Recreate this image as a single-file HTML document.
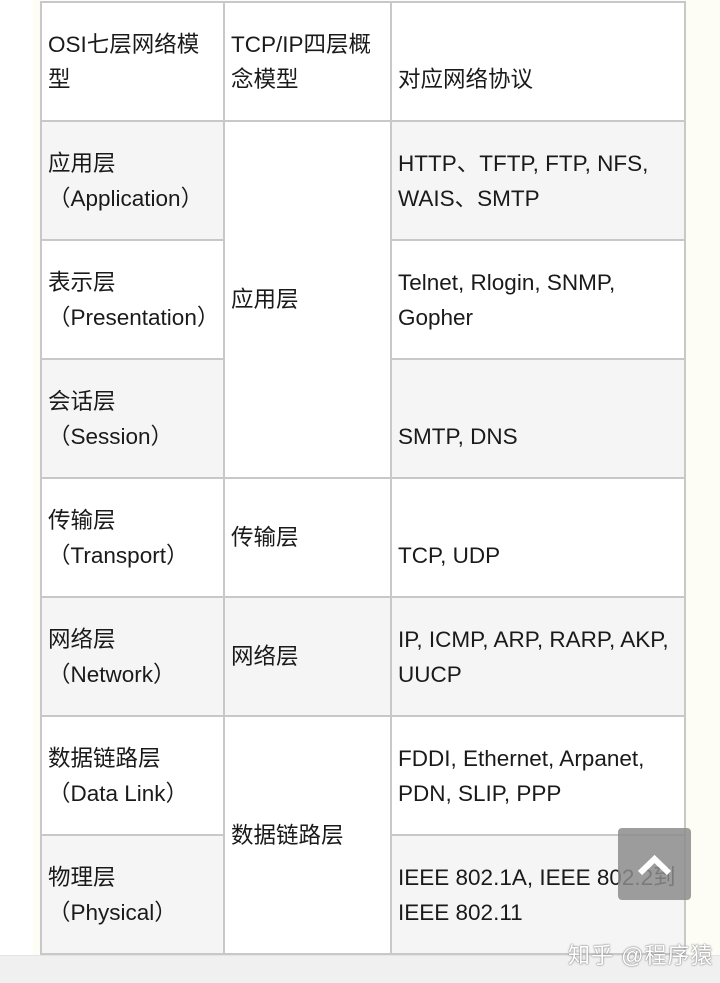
<!DOCTYPE html>
<html><head><meta charset="utf-8"><style>
*{margin:0;padding:0;box-sizing:border-box}
body{width:720px;height:983px;overflow:hidden;background:#fdfdf6;position:relative;font-family:"Liberation Sans","Noto Sans CJK SC",sans-serif;font-size:22.5px;color:#1a1a1a}
.lft{position:absolute;left:0;top:0;width:33px;height:955px;background:#fff}
table{position:absolute;left:40px;top:1px;border-collapse:collapse;table-layout:fixed;width:644px}
td{border:2px solid #c8c8c8;vertical-align:middle;padding:0 0 0 6px;line-height:35px;height:119px;overflow:hidden;white-space:nowrap}
.g{background:#f5f5f5}.w{background:#fff}
.bar{position:absolute;left:0;top:955px;width:720px;height:28px;background:#f0f0f0;border-top:1px solid #e4e4e4}
.wm{position:absolute;left:568px;top:938px;font-size:22px;color:#fff;text-shadow:0 0 2px #888,0 0 1px #666;letter-spacing:1px}
.btn{position:absolute;left:618px;top:828px;width:73px;height:72px;background:rgba(140,140,140,.85);border-radius:4px}
</style></head><body>
<div class="lft"></div>
<table>
<colgroup><col style="width:183px"><col style="width:167px"><col style="width:294px"></colgroup>
<tr class="w"><td>OSI七层网络模<br>型</td><td>TCP/IP四层概<br>念模型</td><td><br>对应网络协议</td></tr>
<tr><td class="g">应用层<br>（Application）</td><td class="w" rowspan="3">应用层</td><td class="g">HTTP、TFTP, FTP, NFS,<br>WAIS、SMTP</td></tr>
<tr><td class="w">表示层<br>（Presentation）</td><td class="w">Telnet, Rlogin, SNMP,<br>Gopher</td></tr>
<tr><td class="g">会话层<br>（Session）</td><td class="g"><br>SMTP, DNS</td></tr>
<tr><td class="w">传输层<br>（Transport）</td><td class="w">传输层</td><td class="w"><br>TCP, UDP</td></tr>
<tr><td class="g">网络层<br>（Network）</td><td class="g">网络层</td><td class="g">IP, ICMP, ARP, RARP, AKP,<br>UUCP</td></tr>
<tr><td class="w">数据链路层<br>（Data Link）</td><td class="w" rowspan="2">数据链路层</td><td class="w">FDDI, Ethernet, Arpanet,<br>PDN, SLIP, PPP</td></tr>
<tr><td class="g">物理层<br>（Physical）</td><td class="g">IEEE 802.1A, IEEE 802.2到<br>IEEE 802.11</td></tr>
</table>
<div class="bar"></div>
<div class="btn"><svg width="73" height="72" viewBox="0 0 73 72"><path d="M22 45 L36.5 31 L51 45" stroke="#fff" stroke-width="6" fill="none"/></svg></div>
<div class="wm">知乎 @程序猿</div>
</body></html>
